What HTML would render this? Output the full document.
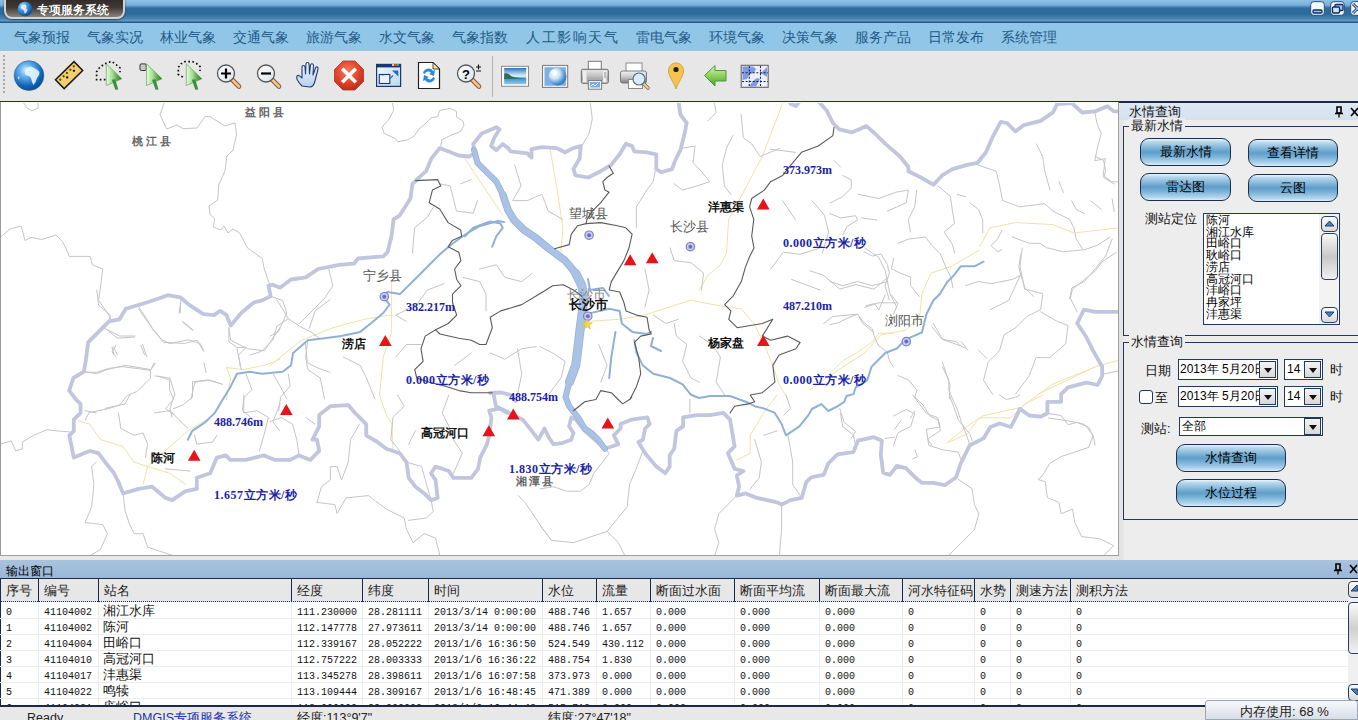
<!DOCTYPE html>
<html><head><meta charset="utf-8">
<style>
*{margin:0;padding:0;box-sizing:border-box}
html,body{width:1358px;height:720px;overflow:hidden;background:#e8e8e8;font-family:"Liberation Sans",sans-serif;position:relative}
.a{position:absolute;white-space:nowrap}
#title{left:0;top:0;width:1358px;height:23px;background:linear-gradient(#8ec2e6 0px,#7ab1da 5px,#2f6d9f 8px,#2b6a9b 14px,#4f87b4 19px,#6a9dc6 21px,#1f5d8e 22px)}
#tab{left:4px;top:-4px;width:121px;height:23px;border:2px solid #d2d2d2;border-top:none;border-radius:0 0 8px 8px;background:linear-gradient(#2a2624,#403a36 55%,#8a837c);box-shadow:0 1px 2px rgba(0,0,0,.5)}
#tabtxt{left:37px;top:2px;color:#fff;font-size:12px;font-weight:bold;text-shadow:0 0 1px #000}
#menu{left:0;top:23px;width:1358px;height:28px;background:#92c6e8}
.mi{top:29px;font-size:14px;line-height:17px;color:#1f5a86}
#tool{left:0;top:51px;width:1358px;height:50px;background:linear-gradient(#ececee 0,#e7e7e7 2px,#e7e7e7)}
#navline{left:0;top:101px;width:1358px;height:2px;background:#1e2d4d}
#map{left:0;top:102px;width:1119px;height:454px;background:#fff;border-right:1px solid #a0a0a0;border-bottom:1px solid #a0a0a0;border-left:1px solid #9a9a9a;overflow:hidden}
#panel{left:1119px;top:103px;width:239px;height:457px;background:linear-gradient(90deg,#e2e2e2 0,#e6e6e6 4px,#ededed 6px)}
#outhdr{left:0;top:560px;width:1358px;height:18px;background:linear-gradient(#a9c3de,#9ab7d6)}
#outline{left:0;top:578px;width:1358px;height:1px;background:#1b2a4a}
#thead{left:0;top:579px;width:1348px;height:23px;background:#e7e7e7;border-bottom:1px dotted #1b2a4a;border-left:1px solid #1b2a4a}
#tbody{left:0;top:602px;width:1348px;height:103px;background:#fff;overflow:hidden;border-left:1px solid #1b2a4a}
#tbot{left:0;top:705px;width:1358px;height:2px;background:#1b2a4a}
#status{left:0;top:707px;width:1358px;height:13px;background:#e8e8e8}
.th{top:583px;font-size:13px;line-height:16px;color:#222}
.sep{top:579px;width:1px;height:23px;background:#1b2a4a}
.vs{top:602px;width:1px;height:103px;background:#ececec}
.hs{left:0;width:1348px;height:1px;background:#ededed}
.td{font-size:12px;line-height:16px;color:#111}
.mono{font-family:"Liberation Mono",monospace;font-size:10px;font-weight:500}
.btn{border:1px solid #1d2f4e;border-radius:9px;background:linear-gradient(#eaf5fc 0%,#b9d9ee 10%,#86b8da 32%,#5f9dc8 50%,#7db4d9 68%,#b2d5ec 90%,#dcedf8 100%);font-size:12.5px;color:#000;text-align:center}
.lbl{font-size:13px;color:#111}
.box{background:#fff;border:1px solid #23395a}
.ddb{width:17px;height:17px;border:1px solid #23395a;background:linear-gradient(#f4f4f4,#d8d8d8);}
.ddb:after{content:"";position:absolute;left:4px;top:6px;border-left:4px solid transparent;border-right:4px solid transparent;border-top:5px solid #111}
.mp{font-size:12px;font-weight:bold;color:#111}
.mv{font-size:12px;font-weight:bold;color:#1a22a8;font-family:"Liberation Serif",serif;letter-spacing:.5px}
.ml{font-size:13px;color:#555}
</style></head><body>

<div class="a" id="title"></div>
<div class="a" id="tab"></div>
<svg class="a" style="left:17px;top:1px" width="16" height="16" viewBox="0 0 16 16"><defs><radialGradient id="tg" cx="35%" cy="30%" r="70%"><stop offset="0" stop-color="#bfe4ff"/><stop offset=".5" stop-color="#3b8fd6"/><stop offset="1" stop-color="#0b4d9a"/></radialGradient></defs><circle cx="8" cy="8" r="7.3" fill="url(#tg)"/><path d="M5 4 L8 3.5 L9.5 5 L9 7 L10.5 9 L9 12 L7.5 12.5 L7 9.5 L5 8 L3.5 7 Z" fill="#e8f4ff" opacity=".85"/></svg>
<div class="a" id="tabtxt">专项服务系统</div>
<svg class="a" style="left:1310px;top:1px" width="15" height="15" viewBox="0 0 15 15"><rect x=".7" y=".7" width="13.6" height="13.6" rx="3" fill="#f4f8fc" stroke="#2a4f78" stroke-width="1"/><rect x="3" y="9" width="9" height="3" rx="1" fill="#9cc4ec" stroke="#0c2a66" stroke-width="1.3"/></svg>
<svg class="a" style="left:1330px;top:1px" width="15" height="15" viewBox="0 0 15 15"><rect x=".7" y=".7" width="13.6" height="13.6" rx="3" fill="#f4f8fc" stroke="#2a4f78" stroke-width="1"/><rect x="5" y="3.5" width="8" height="6" rx="1" fill="#9cc4ec" stroke="#0c2a66" stroke-width="1.3"/><rect x="2.5" y="6" width="7" height="6" rx="1" fill="#cfe3f7" stroke="#0c2a66" stroke-width="1.3"/></svg>
<svg class="a" style="left:1350px;top:1px" width="15" height="15" viewBox="0 0 15 15"><rect x=".7" y=".7" width="13.6" height="13.6" rx="3" fill="#f4f8fc" stroke="#2a4f78" stroke-width="1"/><path d="M3 3 L12 12 M12 3 L3 12" stroke="#0c2a66" stroke-width="3"/><path d="M3 3 L12 12 M12 3 L3 12" stroke="#9cc4ec" stroke-width="1.3"/></svg>
<div class="a" id="menu"></div>
<div class="a mi" style="left:14px;">气象预报</div>
<div class="a mi" style="left:87px;">气象实况</div>
<div class="a mi" style="left:160px;">林业气象</div>
<div class="a mi" style="left:233px;">交通气象</div>
<div class="a mi" style="left:306px;">旅游气象</div>
<div class="a mi" style="left:379px;">水文气象</div>
<div class="a mi" style="left:452px;">气象指数</div>
<div class="a mi" style="left:526px;letter-spacing:1.6px">人工影响天气</div>
<div class="a mi" style="left:636px;">雷电气象</div>
<div class="a mi" style="left:709px;">环境气象</div>
<div class="a mi" style="left:782px;">决策气象</div>
<div class="a mi" style="left:855px;">服务产品</div>
<div class="a mi" style="left:928px;">日常发布</div>
<div class="a mi" style="left:1001px;">系统管理</div>
<div class="a" id="tool"></div>
<div class="a" style="left:3px;top:55px;width:2px;height:39px;background:repeating-linear-gradient(#a8a8a8 0 2px,transparent 2px 4px)"></div>
<div class="a" style="left:492px;top:56px;width:1px;height:41px;background:#b4b4b4"></div>
<svg class="a" style="left:0;top:0" width="800" height="102" viewBox="0 0 800 102"><defs>
<radialGradient id="gl" cx="38%" cy="30%" r="75%"><stop offset="0" stop-color="#cdeaff"/><stop offset=".35" stop-color="#4aa0e6"/><stop offset=".8" stop-color="#0c56a8"/><stop offset="1" stop-color="#083c80"/></radialGradient>
<linearGradient id="ga" x1="0" y1="0" x2="1" y2="1"><stop offset="0" stop-color="#e6f6dc"/><stop offset=".5" stop-color="#7cc25a"/><stop offset="1" stop-color="#2e8a2a"/></linearGradient>
<linearGradient id="lens" x1="0" y1="0" x2="1" y2="1"><stop offset="0" stop-color="#ffffff"/><stop offset="1" stop-color="#d8e4ee"/></linearGradient>
<radialGradient id="stop" cx="45%" cy="35%" r="70%"><stop offset="0" stop-color="#f77a5a"/><stop offset=".6" stop-color="#e0412a"/><stop offset="1" stop-color="#b52a18"/></radialGradient>
<linearGradient id="hand" x1="0" y1="0" x2="0" y2="1"><stop offset="0" stop-color="#f2f7ff"/><stop offset="1" stop-color="#b8cff0"/></linearGradient>
<linearGradient id="pic" x1="0" y1="0" x2="0" y2="1"><stop offset="0" stop-color="#3d86c8"/><stop offset=".45" stop-color="#bfe0f4"/><stop offset=".6" stop-color="#3b7a6a"/><stop offset="1" stop-color="#5fb0d8"/></linearGradient>
<radialGradient id="wg" cx="55%" cy="45%" r="60%"><stop offset="0" stop-color="#ffffff"/><stop offset=".5" stop-color="#8fbfe8"/><stop offset="1" stop-color="#2f78c2"/></radialGradient>
<linearGradient id="prt" x1="0" y1="0" x2="0" y2="1"><stop offset="0" stop-color="#f4f4f4"/><stop offset=".5" stop-color="#c8c8c8"/><stop offset="1" stop-color="#7a7a7a"/></linearGradient>
<linearGradient id="garr" x1="0" y1="0" x2="0" y2="1"><stop offset="0" stop-color="#d9f2b8"/><stop offset=".5" stop-color="#8fd25c"/><stop offset="1" stop-color="#4e9c2c"/></linearGradient>
</defs><defs><radialGradient id="gl2" cx="40%" cy="32%" r="70%"><stop offset="0" stop-color="#d6efff"/><stop offset=".3" stop-color="#6ab4ec"/><stop offset=".75" stop-color="#1264b8"/><stop offset="1" stop-color="#0a4a92"/></radialGradient></defs><circle cx="29" cy="75.6" r="14.9" fill="url(#gl2)" stroke="#2a6aa8" stroke-width=".6"/><path d="M25 71 L27 67.5 L31 66.5 L34 68 L37 69.5 L39.5 72 L39 75 L37 78 L35.5 82 L33.5 85 L32 82 L31 78 L29 76 L26.5 75.5 L25 73.5 Z M17.5 77 L19.5 76.5 L19 80 Z" fill="#e2f4ff" opacity=".92"/><g transform="translate(69.1,75.1) rotate(-44.5)"><rect x="-13" y="-6.2" width="26" height="12.4" fill="#f2cf68" stroke="#1a1a1a" stroke-width="1.5"/><circle cx="-9.5" cy="-3" r="1.1" fill="#5a3a10"/><circle cx="-4.7" cy="-3" r="1.1" fill="#5a3a10"/><circle cx="0" cy="-3" r="1.1" fill="#5a3a10"/><circle cx="4.7" cy="-3" r="1.1" fill="#5a3a10"/><circle cx="9.5" cy="-3" r="1.1" fill="#5a3a10"/><circle cx="-3" cy="0.3" r="1.2" fill="#111"/><circle cx="6.5" cy="0.3" r="1.2" fill="#111"/></g><defs><linearGradient id="ga2" x1="0" y1="0" x2="1" y2="0"><stop offset="0" stop-color="#eafae0"/><stop offset=".4" stop-color="#a8dc94"/><stop offset=".7" stop-color="#5aac4a"/><stop offset="1" stop-color="#2a7a2a"/></linearGradient></defs><path d="M105.5 79.7 H96.6 V71.8 L99.7 67.4 L104.1 64.3 L107.7 62.5 L112.1 61.6 L116.1 64.7 L120 67.8 V72.2" fill="none" stroke="#111" stroke-width="1.7" stroke-dasharray="1.7 2.4"/><path d="M106.3 63.8 L121.8 78.8 L106.3 85.5 Z" fill="url(#ga2)" stroke="#4a9a3e" stroke-width=".6" stroke-linejoin="round"/><path d="M111.8 79.8 L115.3 79.3 L118.3 89.5 L115.3 89.8 Z" fill="#3f8f3f"/><rect x="140" y="63.9" width="6.2" height="6.6" rx="1.2" fill="#c8c8c8" stroke="#333" stroke-width="1"/><path d="M146.5 63.8 L162.0 78.8 L146.5 85.5 Z" fill="url(#ga2)" stroke="#4a9a3e" stroke-width=".6" stroke-linejoin="round"/><path d="M152.0 79.8 L155.5 79.3 L158.5 89.5 L155.5 89.8 Z" fill="#3f8f3f"/><path d="M182.8 77.1 L178.3 74.4 V67.4 L181 63.8 L185 61.6 L192.5 61.6 L196.9 63.8 L200 66.5 V70.9" fill="none" stroke="#111" stroke-width="1.7" stroke-dasharray="1.7 2.4"/><path d="M186.3 63.8 L201.8 78.8 L186.3 85.5 Z" fill="url(#ga2)" stroke="#4a9a3e" stroke-width=".6" stroke-linejoin="round"/><path d="M191.8 79.8 L195.3 79.3 L198.3 89.5 L195.3 89.8 Z" fill="#3f8f3f"/><path d="M232 79.5 L239 86.5" stroke="#7a5a3a" stroke-width="4.6" stroke-linecap="round"/><path d="M232 79.5 L239 86.5" stroke="#f3c28a" stroke-width="2.8" stroke-linecap="round"/><circle cx="226" cy="73.5" r="8.5" fill="url(#lens)" stroke="#555" stroke-width="1.3"/><path d="M221 73.5 H231 M226 68.5 V78.5" stroke="#000" stroke-width="2.2"/><path d="M272 79.5 L279 86.5" stroke="#7a5a3a" stroke-width="4.6" stroke-linecap="round"/><path d="M272 79.5 L279 86.5" stroke="#f3c28a" stroke-width="2.8" stroke-linecap="round"/><circle cx="266" cy="73.5" r="8.5" fill="url(#lens)" stroke="#555" stroke-width="1.3"/><path d="M261 73.5 H271" stroke="#000" stroke-width="2.2"/><path d="M302 86 C298 82 296 78 297 76 C298 74.5 300 76 302 78 L302 67 C302 65 304.5 65 305 67 L305.5 74 L306 64 C306 62 309 62 309 64 L309.5 74 L310.5 65 C311 63 313.5 63.5 313.5 65.5 L313 75 L315.5 68 C316.5 66 318.5 67 318 69 L315 81 C314 85 312 87 310 87 Z" fill="url(#hand)" stroke="#1f3f70" stroke-width="1.1" stroke-linejoin="round"/><path d="M343 61 L355 61 L363.5 69.5 L363.5 81.5 L355 90 L343 90 L334.5 81.5 L334.5 69.5 Z" fill="url(#stop)" stroke="#a83a2a" stroke-width=".8"/><path d="M343.5 70 L354.5 81 M354.5 70 L343.5 81" stroke="#fff" stroke-width="3.6" stroke-linecap="square"/><defs><linearGradient id="wb" x1="0" y1="0" x2="1" y2="1"><stop offset="0" stop-color="#f4f9fe"/><stop offset="1" stop-color="#bcd6ef"/></linearGradient></defs><rect x="376.6" y="64.4" width="24" height="22" fill="url(#wb)" stroke="#163a6e" stroke-width="1.2"/><rect x="376.6" y="64.4" width="24" height="3" fill="#163a6e"/><rect x="392" y="64" width="2.2" height="2" fill="#f0d040"/><rect x="394.3" y="64" width="2.2" height="2" fill="#d84a2a"/><rect x="396.6" y="64" width="2.2" height="2" fill="#5ab04a"/><rect x="379.3" y="74.5" width="10.5" height="9" fill="#e8f2fb" stroke="#163a6e" stroke-width="1.1"/><rect x="381" y="74" width="3" height="1.2" fill="#163a6e"/><path d="M392 70.5 H398.3 V76.5 Z" fill="#1e6fc0"/><path d="M393 75.5 L390 78.5" stroke="#1e6fc0" stroke-width="1.2"/><path d="M418.5 62.5 H433 L439.5 69 V88.5 H418.5 Z" fill="#fff" stroke="#222" stroke-width="1.2"/><path d="M433 62.5 V69 H439.5 Z" fill="#f6e6a8" stroke="#222" stroke-width=".8"/><path d="M423 73 C424 68 431 67 433 71 L435 70 L434 76 L429 74 L431 73 C429 71 426 71 425 74 Z" fill="#2a8ad6"/><path d="M435 78 C434 83 427 84 425 80 L423 81 L424 75 L429 77 L427 78 C429 80 432 80 433 77 Z" fill="#2a8ad6"/><path d="M472 79.5 L479 86.5" stroke="#7a5a3a" stroke-width="4.6" stroke-linecap="round"/><path d="M472 79.5 L479 86.5" stroke="#f3c28a" stroke-width="2.8" stroke-linecap="round"/><circle cx="466" cy="73.5" r="8.5" fill="url(#lens)" stroke="#555" stroke-width="1.3"/><text x="462" y="78.5" font-family="Liberation Sans" font-weight="bold" font-size="13" fill="#000">?</text><path d="M476 67 H481 M478.5 64.5 V69.5 M476 71 H481" stroke="#111" stroke-width="1.1"/><defs><linearGradient id="sky" x1="0" y1="0" x2="0" y2="1"><stop offset="0" stop-color="#2f74c4"/><stop offset=".45" stop-color="#cfe8f7"/><stop offset="1" stop-color="#e8f4fb"/></linearGradient><linearGradient id="sea" x1="0" y1="0" x2="0" y2="1"><stop offset="0" stop-color="#3a88c0"/><stop offset="1" stop-color="#8ccaf0"/></linearGradient><radialGradient id="wg2" cx="35%" cy="35%" r="70%"><stop offset="0" stop-color="#ffffff"/><stop offset=".4" stop-color="#cfe3f6"/><stop offset=".8" stop-color="#4f8fd0"/><stop offset="1" stop-color="#2f6fb8"/></radialGradient><linearGradient id="prt2" x1="0" y1="0" x2="0" y2="1"><stop offset="0" stop-color="#e8e8e8"/><stop offset=".45" stop-color="#c4c4c4"/><stop offset=".7" stop-color="#a8a8a8"/><stop offset="1" stop-color="#d4d4d4"/></linearGradient></defs><rect x="501.5" y="66.3" width="27" height="20" fill="#fbfbfb" stroke="#8a8a8a" stroke-width="1"/><rect x="504.2" y="68" width="22" height="16.2" fill="url(#sky)"/><path d="M504.2 77.5 L526.2 77.5 L526.2 84.2 L504.2 84.2 Z" fill="url(#sea)"/><path d="M504.2 73.5 C507 73 509 74 511 76 C514 77.5 519 77.5 523 78.5 L504.2 79 Z" fill="#2e6e56"/><rect x="542.5" y="65.4" width="25.2" height="22" fill="#f6f6f6" stroke="#7a7a7a" stroke-width="1"/><rect x="544.5" y="67.2" width="21.4" height="18.6" fill="#7ab2e6"/><circle cx="557.5" cy="76.5" r="9" fill="url(#wg2)"/><path d="M552 70 C555 69 558 71 557 74 C555 76 553 74 551 73 Z" fill="#fff" opacity=".9"/><rect x="588.3" y="61.3" width="13" height="8.5" fill="#fdfdfd" stroke="#7a7a7a" stroke-width="1"/><rect x="581.3" y="69.3" width="27" height="14" rx="1.5" fill="url(#prt2)" stroke="#6a6a6a" stroke-width="1"/><rect x="583" y="71" width="3.5" height="11" fill="#eeeeee"/><rect x="603" y="71" width="3.5" height="11" fill="#eeeeee"/><path d="M604 73 H606 M604 75 H606 M604 77 H606" stroke="#666" stroke-width=".7"/><rect x="588.3" y="80.6" width="13.3" height="8.6" fill="#fbfbfb" stroke="#7a7a7a" stroke-width="1"/><rect x="589.8" y="82" width="10.3" height="5.5" fill="#7aaee0"/><path d="M590.5 86.5 L593 84 L595 86 L598 83" stroke="#fff" stroke-width=".8" fill="none"/><rect x="626" y="63" width="16" height="9" fill="#fff" stroke="#8a8a8a" stroke-width="1"/><rect x="620.5" y="71" width="26" height="12" rx="2" fill="url(#prt)" stroke="#7a7a7a" stroke-width="1"/><rect x="628.5" y="79.5" width="14" height="9" fill="#fff" stroke="#8a8a8a" stroke-width="1"/><path d="M643 83 L648 88" stroke="#7a5a3a" stroke-width="3.4" stroke-linecap="round"/><path d="M643 83 L648 88" stroke="#f3d48a" stroke-width="2" stroke-linecap="round"/><circle cx="639" cy="79" r="6" fill="#d8ecfa" stroke="#5a6f86" stroke-width="1.2"/><path d="M676 89 C674 82 668.5 77 668.5 71 C668.5 66 672 63 676 63 C680 63 683.5 66 683.5 71 C683.5 77 678 82 676 89 Z" fill="#f6c44e" stroke="#c89a30" stroke-width=".8"/><circle cx="676" cy="69.5" r="2.6" fill="#222"/><path d="M704.5 75.5 L715 65.5 L715 70.5 L726 70.5 L726 81 L715 81 L715 86 Z" fill="url(#garr)" stroke="#4a9a34" stroke-width="1" stroke-linejoin="round"/><rect x="741.2" y="65.3" width="27" height="22" fill="#eef0f6" stroke="#666" stroke-width="1.1"/><path d="M742.5 66.5 H753 L756 69 L754 73 L750 74 L747 79 L742.5 80 Z M767 67 L767 77 L761 73 Z M749 86.5 L753 81 L757 78 L760 79 L756 86.5 Z" fill="#7e9ae0"/><path d="M742 72.7 H768 M742 81.5 H768 M749.3 66 V87 M760.5 66 V87" stroke="#14246a" stroke-width="1.1" stroke-dasharray="2 1.6"/></svg>
<div class="a" id="navline"></div>
<div class="a" id="map"></div>
<svg class="a" style="left:1px;top:103px" width="1117" height="452" viewBox="1 103 1117 452">
<g fill="none" stroke-linejoin="round" stroke-linecap="round">
<polyline points="391.6,281.6 391.6,331.9 383.3,357.1 379.6,395.0 386.3,415.1 391.9,424.1 393.0,448.7" stroke="#efe3a6" stroke-width="1"/>
<polyline points="270.0,365.4 301.5,340.3 332.9,327.7 364.4,319.3 391.0,315.0" stroke="#efe3a6" stroke-width="1"/>
<polyline points="226.5,367.5 243.3,369.6 264.3,365.4 280.0,359.2" stroke="#efe3a6" stroke-width="1"/>
<polyline points="226.5,367.5 230.7,378.0 226.5,399.0" stroke="#efe3a6" stroke-width="1"/>
<polyline points="78.3,420.7 89.5,424.1 100.6,439.7 123.0,446.4 134.2,462.1 147.6,466.6 143.1,484.5" stroke="#efe3a6" stroke-width="1"/>
<polyline points="147.6,466.6 170.0,473.3 185.6,484.5" stroke="#efe3a6" stroke-width="1"/>
<polyline points="147.6,466.6 170.0,446.4 187.9,430.8 210.2,417.4" stroke="#efe3a6" stroke-width="1"/>
<polyline points="588.2,321.4 619.7,319.3 644.9,315.1 670.0,306.7 691.0,300.4 724.6,306.7 741.3,308.8 753.9,323.5 764.4,344.5 772.8,365.4 779.1,384.3 787.5,399.0" stroke="#efe3a6" stroke-width="1"/>
<polyline points="699.4,290.0 707.8,275.3 720.4,264.8 726.5,253.0 728.6,219.4 741.2,196.4 762.2,156.5 780.0,110.4 782.6,102.0" stroke="#efe3a6" stroke-width="1"/>
<polyline points="979.0,250.3 951.6,266.3 931.0,273.1 921.9,293.7 919.6,316.5 905.9,330.2 880.8,334.8 864.8,353.0 839.7,369.0 810.0,389.5" stroke="#efe3a6" stroke-width="1"/>
<polyline points="1038.3,394.1 1095.4,366.7 1120.0,359.9" stroke="#efe3a6" stroke-width="1"/>
<polyline points="979.7,246.7 990.0,227.8 1015.2,222.6 1052.9,224.6 1073.9,233.0 1118.9,227.8" stroke="#efe3a6" stroke-width="1"/>
<polyline points="947.0,443.0 967.5,433.8 979.0,417.8 1010.9,417.8 1024.6,404.1 1042.9,395.0" stroke="#efe3a6" stroke-width="1"/>
<polyline points="777.0,395.0 763.7,412.9 750.2,435.3 750.2,453.2 736.8,459.9" stroke="#efe3a6" stroke-width="1"/>
<polyline points="550.3,150.2 556.6,186.0 562.9,227.8 560.8,253.0" stroke="#efe3a6" stroke-width="1"/>
<polyline points="464.9,158.6 502.7,215.3" stroke="#efe3a6" stroke-width="1"/>
<polyline points="1095.1,367.1 1052.7,384.1 1020.9,407.4 982.7,415.9 970.0,424.4 948.8,441.3" stroke="#efe3a6" stroke-width="1"/>
<polyline points="830.0,373.5 842.7,360.7 857.6,352.3 872.4,341.7 878.8,333.2 893.6,333.2" stroke="#efe3a6" stroke-width="1"/>
<polyline points="23.0,102.0 27.0,108.0 32.0,111.0 38.0,108.0 38.0,102.0" stroke="#c4c4ca" stroke-width="1"/>
<polyline points="164.6,102.0 160.0,114.5 166.7,129.0 177.0,125.0 183.0,128.7 197.0,128.0 205.0,116.6 210.0,116.6 225.0,126.0 235.0,122.8 236.5,135.0 233.0,150.0 227.0,156.0 225.0,170.7 218.7,185.0 217.7,200.0 209.0,206.0 210.0,214.5 214.6,218.7 213.5,227.0 220.8,230.0 224.0,226.0 228.0,233.0 233.0,229.0 239.6,233.0 247.5,248.0 262.2,258.5 264.3,269.0 268.5,281.6 270.6,285.8" stroke="#c4c4ca" stroke-width="1"/>
<polyline points="0.0,237.4 10.0,229.0 21.0,226.0 22.0,229.0 25.0,240.5 31.0,237.4 41.7,239.5 56.0,235.0 62.5,241.6 67.7,252.0 69.2,256.4 90.2,256.4 92.3,264.8 102.8,269.0 100.7,285.8 98.6,300.4 109.1,315.1 111.2,320.4" stroke="#c4c4ca" stroke-width="1"/>
<polyline points="392.5,102.0 393.6,110.4 389.4,118.8 382.0,127.2 384.2,133.5 395.7,138.7 397.8,141.8 408.3,139.8 414.6,135.6 418.8,129.3 426.1,123.0 431.3,117.7 437.6,116.7 439.7,110.4 450.2,108.3 456.5,111.4 456.5,116.7 462.8,120.9 463.9,125.1 460.7,131.4 450.2,135.6 441.8,139.8 440.8,146.0" stroke="#c4c4ca" stroke-width="1"/>
<polyline points="412.5,253.0 414.6,227.8 427.2,217.3 433.5,206.9" stroke="#c4c4ca" stroke-width="1"/>
<polyline points="439.7,183.8 450.2,185.9 456.5,211.1 473.3,213.2 477.5,200.6" stroke="#c4c4ca" stroke-width="1"/>
<polyline points="460.7,183.8 471.2,179.6" stroke="#c4c4ca" stroke-width="1"/>
<polyline points="590.2,102.0 592.3,118.8 589.1,133.5 581.8,146.0" stroke="#c4c4ca" stroke-width="1"/>
<polyline points="714.1,102.0 716.2,112.5 707.8,120.9" stroke="#c4c4ca" stroke-width="1"/>
<polyline points="682.5,148.1 695.0,146.0 693.0,162.8 701.3,171.2 709.7,181.7 697.2,185.9 682.5,190.1 674.1,183.8" stroke="#c4c4ca" stroke-width="1"/>
<polyline points="732.8,135.6 726.5,148.1 722.3,164.9 724.4,185.9 730.7,194.3" stroke="#c4c4ca" stroke-width="1"/>
<polyline points="741.2,114.6 743.3,137.7 751.7,143.9 760.1,156.5 780.0,148.1" stroke="#c4c4ca" stroke-width="1"/>
<polyline points="655.2,171.2 653.1,181.7 646.8,190.1 636.3,206.9 636.3,227.8" stroke="#c4c4ca" stroke-width="1"/>
<polyline points="514.7,165.0 521.0,185.9 512.6,200.6 527.3,200.6 541.9,194.3 548.2,211.1 562.9,219.4" stroke="#c4c4ca" stroke-width="1"/>
<polyline points="937.8,185.9 950.4,196.4 952.5,211.1 954.6,223.6 944.1,232.0 952.5,244.6 954.6,253.0" stroke="#c4c4ca" stroke-width="1"/>
<polyline points="1036.4,144.0 1042.7,156.5 1044.8,171.2 1050.0,190.0" stroke="#c4c4ca" stroke-width="1"/>
<polyline points="916.8,190.1 914.7,206.9 908.4,219.4 910.5,232.0" stroke="#c4c4ca" stroke-width="1"/>
<polyline points="858.1,194.3 879.1,198.5 895.8,192.2 908.4,190.1 906.3,202.7 887.4,211.1" stroke="#c4c4ca" stroke-width="1"/>
<polyline points="770.0,149.2 795.2,152.3" stroke="#c4c4ca" stroke-width="1"/>
<polyline points="811.9,200.6 824.5,215.3 828.7,232.0 822.4,253.0" stroke="#c4c4ca" stroke-width="1"/>
<polyline points="782.6,200.6 795.2,219.4" stroke="#c4c4ca" stroke-width="1"/>
<polyline points="1094.8,112.5 1096.9,123.0 1101.1,133.5 1096.9,150.2 1094.8,160.7 1105.3,158.6 1103.2,175.4 1111.6,181.7 1118.9,181.7" stroke="#c4c4ca" stroke-width="1"/>
<polyline points="977.6,164.9 990.0,169.1 996.3,171.2 1000.5,190.0 1002.6,200.5 1019.4,206.8 1044.5,203.7 1052.9,211.0 1069.7,219.4 1073.9,227.8 1076.0,238.3 1082.2,248.8" stroke="#c4c4ca" stroke-width="1"/>
<polyline points="138.4,308.8 148.9,323.5 153.1,329.8 163.6,342.4 184.6,343.4 197.1,340.3 203.4,350.8" stroke="#c4c4ca" stroke-width="1"/>
<polyline points="107.0,329.8 117.4,338.2 134.2,337.1" stroke="#c4c4ca" stroke-width="1"/>
<polyline points="182.5,321.4 193.0,329.8" stroke="#c4c4ca" stroke-width="1"/>
<polyline points="86.0,371.7 96.5,373.8 107.0,369.6 125.8,365.4 151.0,369.6 155.2,363.4" stroke="#c4c4ca" stroke-width="1"/>
<polyline points="228.6,327.7 230.7,340.3 247.5,348.7 264.3,350.8 280.0,327.7" stroke="#c4c4ca" stroke-width="1"/>
<polyline points="237.0,348.7 241.2,369.6" stroke="#c4c4ca" stroke-width="1"/>
<polyline points="190.9,399.0 195.0,382.2 209.7,380.1 222.3,384.3" stroke="#c4c4ca" stroke-width="1"/>
<polyline points="113.3,346.6 117.4,355.0" stroke="#c4c4ca" stroke-width="1"/>
<polyline points="142.6,344.5 146.8,356.7" stroke="#c4c4ca" stroke-width="1"/>
<polyline points="180.4,302.5 180.4,313.0" stroke="#c4c4ca" stroke-width="1"/>
<polyline points="155.2,376.0 170.0,378.0 175.0,395.0" stroke="#c4c4ca" stroke-width="1"/>
<polyline points="270.0,296.2 282.6,300.4 286.8,313.0 278.4,331.9 270.0,336.1" stroke="#c4c4ca" stroke-width="1"/>
<polyline points="299.4,323.5 312.0,311.0 324.5,298.3 332.9,285.8 328.7,269.0" stroke="#c4c4ca" stroke-width="1"/>
<polyline points="307.8,340.3 305.7,357.1 307.8,369.6 320.3,378.0 324.5,399.0" stroke="#c4c4ca" stroke-width="1"/>
<polyline points="273.2,374.0 282.6,390.6 286.8,399.0" stroke="#c4c4ca" stroke-width="1"/>
<polyline points="343.4,357.1 360.2,365.4 366.5,378.0 374.9,399.0" stroke="#c4c4ca" stroke-width="1"/>
<polyline points="395.8,357.1 406.3,344.5 421.0,344.5" stroke="#c4c4ca" stroke-width="1"/>
<polyline points="406.3,321.4 395.8,315.1 416.8,304.6 427.3,290.0 444.1,283.7" stroke="#c4c4ca" stroke-width="1"/>
<polyline points="479.7,269.0 496.5,264.8 504.9,277.4 521.7,281.6 532.2,273.2" stroke="#c4c4ca" stroke-width="1"/>
<polyline points="463.0,277.4 479.7,281.6 486.0,294.1 486.0,310.9" stroke="#c4c4ca" stroke-width="1"/>
<polyline points="490.2,352.9 504.9,359.2 521.7,348.7 536.4,346.6" stroke="#c4c4ca" stroke-width="1"/>
<polyline points="517.5,348.7 521.7,373.8 517.5,394.8" stroke="#c4c4ca" stroke-width="1"/>
<polyline points="454.6,365.4 471.3,352.9" stroke="#c4c4ca" stroke-width="1"/>
<polyline points="670.0,248.0 674.2,260.6 691.0,262.7 703.6,273.2 701.5,290.0" stroke="#c4c4ca" stroke-width="1"/>
<polyline points="644.9,269.0 649.1,290.0 644.9,306.7" stroke="#c4c4ca" stroke-width="1"/>
<polyline points="674.2,323.5 676.3,336.1 686.8,344.5 682.6,361.3 691.0,378.0 699.4,382.2" stroke="#c4c4ca" stroke-width="1"/>
<polyline points="699.4,336.1 712.0,344.5 720.4,357.1 716.2,382.2 724.6,394.8" stroke="#c4c4ca" stroke-width="1"/>
<polyline points="770.7,269.0 783.3,252.2 800.1,254.3 820.0,248.0" stroke="#c4c4ca" stroke-width="1"/>
<polyline points="791.7,279.5 820.0,290.0" stroke="#c4c4ca" stroke-width="1"/>
<polyline points="540.0,346.6 552.6,352.9 565.2,361.3 561.0,378.0 548.4,394.8" stroke="#c4c4ca" stroke-width="1"/>
<polyline points="598.7,344.5 607.1,365.4 600.8,382.2" stroke="#c4c4ca" stroke-width="1"/>
<polyline points="653.3,315.1 665.8,323.5 678.4,319.3" stroke="#c4c4ca" stroke-width="1"/>
<polyline points="1022.3,248.0 1020.0,266.3 1024.6,289.1 1042.9,293.7 1040.6,309.6 1026.9,316.5 1015.5,327.9 1004.1,334.8 999.5,350.7 988.1,362.2 983.5,380.4 992.6,394.1" stroke="#c4c4ca" stroke-width="1"/>
<polyline points="1116.0,252.6 1102.2,261.7 1095.4,270.8 1072.5,289.1 1070.3,298.2 1077.1,311.9" stroke="#c4c4ca" stroke-width="1"/>
<polyline points="1040.6,311.9 1056.6,321.0 1068.0,325.6 1065.7,343.9 1049.7,357.6 1036.0,357.6 1029.2,375.9 1015.5,394.1" stroke="#c4c4ca" stroke-width="1"/>
<polyline points="864.8,248.0 878.5,257.1 885.3,270.8 889.9,293.7 896.8,307.4" stroke="#c4c4ca" stroke-width="1"/>
<polyline points="810.0,270.8 823.7,275.4 839.7,289.1 855.7,284.6 873.9,289.1 887.6,277.7" stroke="#c4c4ca" stroke-width="1"/>
<polyline points="864.8,307.4 878.5,302.8 896.8,302.8" stroke="#c4c4ca" stroke-width="1"/>
<polyline points="823.7,323.3 832.8,316.5 857.9,314.2 862.5,323.3 873.9,332.5" stroke="#c4c4ca" stroke-width="1"/>
<polyline points="933.3,323.3 942.4,339.3 956.1,341.6 960.7,346.2" stroke="#c4c4ca" stroke-width="1"/>
<polyline points="942.4,362.2 950.0,385.0 949.3,399.0" stroke="#c4c4ca" stroke-width="1"/>
<polyline points="990.4,309.6 1008.6,300.5 1020.0,276.0" stroke="#c4c4ca" stroke-width="1"/>
<polyline points="0.0,444.2 11.2,440.9 15.7,450.9 22.4,448.7 22.4,442.0 33.5,435.3 47.0,429.7 55.9,430.8 69.3,431.9" stroke="#c4c4ca" stroke-width="1"/>
<polyline points="96.2,462.1 91.7,466.6 93.9,484.5 91.7,506.8 85.0,522.5 102.9,524.7 107.4,533.7 100.6,549.3 89.5,556.0" stroke="#c4c4ca" stroke-width="1"/>
<polyline points="123.0,493.4 125.2,511.3 129.7,524.7 134.2,533.7 143.1,533.7 147.6,547.1 161.0,551.6 174.5,556.0" stroke="#c4c4ca" stroke-width="1"/>
<polyline points="118.5,412.9 120.8,428.5 134.2,435.3 143.1,433.0 147.6,444.2 145.4,457.6" stroke="#c4c4ca" stroke-width="1"/>
<polyline points="85.0,410.7 96.2,412.9" stroke="#c4c4ca" stroke-width="1"/>
<polyline points="105.1,408.4 125.2,403.9 129.7,395.0" stroke="#c4c4ca" stroke-width="1"/>
<polyline points="154.3,412.9 170.0,410.7 178.9,419.6 187.9,428.5" stroke="#c4c4ca" stroke-width="1"/>
<polyline points="174.5,395.0 170.0,408.4 172.2,417.4" stroke="#c4c4ca" stroke-width="1"/>
<polyline points="194.6,435.3 196.8,444.2 212.5,442.0 217.0,435.3" stroke="#c4c4ca" stroke-width="1"/>
<polyline points="243.8,395.0 243.8,412.9 257.2,410.7 268.4,417.4 263.9,435.3 259.4,451.0" stroke="#c4c4ca" stroke-width="1"/>
<polyline points="280.0,404.0 272.9,421.8 279.6,430.8" stroke="#c4c4ca" stroke-width="1"/>
<polyline points="165.5,468.8 190.1,471.0" stroke="#c4c4ca" stroke-width="1"/>
<polyline points="317.0,502.4 321.4,486.7 330.4,480.0 330.4,466.6 337.1,466.6 341.6,480.0 348.3,462.1 350.5,439.7 359.5,424.1" stroke="#c4c4ca" stroke-width="1"/>
<polyline points="317.0,502.4 334.9,504.6 337.1,513.5 346.0,497.9 368.4,495.6 386.3,509.1 404.2,518.0 406.4,529.2 413.1,542.6 424.3,533.7 435.5,538.1 440.0,556.0" stroke="#c4c4ca" stroke-width="1"/>
<polyline points="406.4,462.1 421.6,466.6 431.0,500.1" stroke="#c4c4ca" stroke-width="1"/>
<polyline points="431.0,500.1 433.3,511.3 426.6,518.0 408.7,520.3" stroke="#c4c4ca" stroke-width="1"/>
<polyline points="448.9,395.0 442.2,412.9 448.9,426.3 453.4,439.7 462.3,453.2 453.4,473.3" stroke="#c4c4ca" stroke-width="1"/>
<polyline points="518.3,495.6 525.0,502.4 534.0,515.8 542.9,529.2 550.0,538.1" stroke="#c4c4ca" stroke-width="1"/>
<polyline points="270.0,421.8 281.2,417.4 292.4,424.1 296.8,439.7 299.1,455.4" stroke="#c4c4ca" stroke-width="1"/>
<polyline points="305.8,417.4 314.7,424.1" stroke="#c4c4ca" stroke-width="1"/>
<polyline points="397.5,395.0 404.2,406.2 393.0,417.4 390.8,439.7 399.7,450.9" stroke="#c4c4ca" stroke-width="1"/>
<polyline points="415.4,430.8 408.7,444.2" stroke="#c4c4ca" stroke-width="1"/>
<polyline points="540.0,488.9 553.4,486.7 566.8,491.2 580.3,491.2 589.2,484.5 593.7,473.3 602.6,462.1 609.3,453.2 604.9,448.7" stroke="#c4c4ca" stroke-width="1"/>
<polyline points="642.9,450.9 636.2,468.8 629.5,484.5 627.2,506.8 607.1,531.4 618.3,542.6 625.0,556.0" stroke="#c4c4ca" stroke-width="1"/>
<polyline points="540.0,524.7 551.2,540.4 573.5,542.6 607.1,531.4" stroke="#c4c4ca" stroke-width="1"/>
<polyline points="736.8,495.6 718.9,513.5 714.5,529.2 718.9,542.6 714.5,556.0" stroke="#c4c4ca" stroke-width="1"/>
<polyline points="781.6,504.6 781.6,529.2 779.3,556.0" stroke="#c4c4ca" stroke-width="1"/>
<polyline points="788.0,435.0 792.7,462.0 792.7,484.5 801.7,497.9" stroke="#c4c4ca" stroke-width="1"/>
<polyline points="754.7,439.7 761.4,462.1 759.2,477.8 750.2,489.0" stroke="#c4c4ca" stroke-width="1"/>
<polyline points="689.9,399.5 689.9,412.9" stroke="#c4c4ca" stroke-width="1"/>
<polyline points="786.0,395.0 790.5,408.4 783.8,415.1" stroke="#c4c4ca" stroke-width="1"/>
<polyline points="763.7,435.3 777.1,430.8" stroke="#c4c4ca" stroke-width="1"/>
<polyline points="958.4,479.5 972.1,488.6 974.4,504.6 978.9,513.7 974.4,529.7 960.7,543.4 949.3,554.8" stroke="#c4c4ca" stroke-width="1"/>
<polyline points="1047.4,413.3 1061.1,415.5 1068.0,424.7 1077.1,422.4 1088.5,427.0 1093.1,436.1 1088.5,447.5 1061.1,456.6 1049.7,463.5 1042.9,474.9 1038.3,479.5 1045.2,481.8 1047.4,497.7 1058.9,502.3 1061.1,513.7 1072.5,509.2 1074.9,522.9 1081.7,536.6 1100.0,538.8 1113.7,545.7 1104.5,554.8" stroke="#c4c4ca" stroke-width="1"/>
<polyline points="839.7,408.7 844.2,422.4 855.7,431.5 851.1,438.4" stroke="#c4c4ca" stroke-width="1"/>
<polyline points="912.7,395.0 926.4,413.3 937.8,417.8 940.1,427.0 926.4,429.2 928.7,445.2 942.4,449.8 958.4,452.1 960.7,458.9" stroke="#c4c4ca" stroke-width="1"/>
<polyline points="949.3,395.0 956.1,413.3 958.4,420.1 969.8,433.8 972.1,440.7" stroke="#c4c4ca" stroke-width="1"/>
<polyline points="910.5,417.8 915.0,411.0" stroke="#c4c4ca" stroke-width="1"/>
<polyline points="901.3,420.1 894.5,429.2" stroke="#c4c4ca" stroke-width="1"/>
<polyline points="915.0,449.8 917.3,456.6 912.7,459.0" stroke="#c4c4ca" stroke-width="1"/>
<polyline points="999.5,395.0 1006.4,399.6 1015.5,397.3 1020.0,395.0" stroke="#c4c4ca" stroke-width="1"/>
<polyline points="885.3,438.4 894.5,437.2" stroke="#c4c4ca" stroke-width="1"/>
<polyline points="1095.1,156.4 1103.6,160.6 1105.7,171.2 1103.6,177.6 1114.2,183.9" stroke="#c4c4ca" stroke-width="1"/>
<polyline points="830.0,203.0 842.7,196.7 851.2,188.2 851.2,179.7 842.7,175.5" stroke="#c4c4ca" stroke-width="1"/>
<polyline points="830.0,213.6 840.6,217.9 855.5,215.7 857.6,220.0 847.0,226.4 842.7,234.8" stroke="#c4c4ca" stroke-width="1"/>
<polyline points="861.8,217.9 876.7,220.0" stroke="#c4c4ca" stroke-width="1"/>
<polyline points="957.3,194.5 965.7,196.7" stroke="#c4c4ca" stroke-width="1"/>
<polyline points="970.0,203.0 978.5,209.4 982.7,220.0 982.7,232.7" stroke="#c4c4ca" stroke-width="1"/>
<polyline points="863.9,251.8 872.4,256.0 880.9,253.9 887.3,264.5 889.4,273.0 885.1,285.7 889.4,300.0" stroke="#c4c4ca" stroke-width="1"/>
<polyline points="897.9,243.3 908.5,239.1 925.4,237.0 931.8,245.4 940.3,253.9 946.6,268.8 950.9,277.3 953.0,287.9" stroke="#c4c4ca" stroke-width="1"/>
<polyline points="893.6,258.2 891.5,268.8 900.0,273.0 910.6,277.3 910.6,285.7 919.1,296.3" stroke="#c4c4ca" stroke-width="1"/>
<polyline points="1012.4,237.0 1029.4,243.3 1040.0,243.3 1046.3,247.6 1063.3,251.8 1084.5,249.7 1097.2,245.4 1109.9,237.0" stroke="#c4c4ca" stroke-width="1"/>
<polyline points="1020.9,253.9 1018.8,266.7 1020.9,275.1 1012.4,279.4 991.2,283.6 978.5,281.5 965.7,285.7" stroke="#c4c4ca" stroke-width="1"/>
<polyline points="1112.1,239.1 1105.7,256.0 1095.1,268.8 1084.5,281.5 1071.8,287.9 1069.7,298.5" stroke="#c4c4ca" stroke-width="1"/>
<polyline points="1020.9,275.1 1025.0,288.0 1033.6,296.3" stroke="#c4c4ca" stroke-width="1"/>
<polyline points="1001.8,230.6 997.5,239.1 991.2,245.4 997.5,251.8 1001.8,249.7" stroke="#c4c4ca" stroke-width="1"/>
<polyline points="1071.8,200.9 1076.0,209.4 1084.5,213.6" stroke="#c4c4ca" stroke-width="1"/>
<polyline points="1090.8,200.9 1101.4,209.4" stroke="#c4c4ca" stroke-width="1"/>
<polyline points="1112.1,198.8 1114.2,211.5" stroke="#c4c4ca" stroke-width="1"/>
<polyline points="1059.1,181.8 1063.3,192.4" stroke="#c4c4ca" stroke-width="1"/>
<polyline points="830.0,281.5 842.7,285.7 857.6,281.5 872.4,285.7 887.3,281.5" stroke="#c4c4ca" stroke-width="1"/>
<polyline points="834.2,160.6 840.6,167.0" stroke="#c4c4ca" stroke-width="1"/>
<polyline points="830.0,324.7 838.5,322.6 847.0,318.3 857.6,314.1 863.9,322.6 872.4,328.9 874.5,337.4 878.8,345.9 887.3,352.3 889.4,360.7 893.6,367.1" stroke="#c4c4ca" stroke-width="1"/>
<polyline points="866.0,305.6 874.5,303.5 878.8,309.9 885.1,295.0" stroke="#c4c4ca" stroke-width="1"/>
<polyline points="891.5,295.0 897.9,303.5 893.6,314.1" stroke="#c4c4ca" stroke-width="1"/>
<polyline points="931.8,326.8 942.4,339.5 955.1,343.8 965.7,348.0" stroke="#c4c4ca" stroke-width="1"/>
<polyline points="961.5,341.7 967.8,350.2" stroke="#c4c4ca" stroke-width="1"/>
<polyline points="942.4,367.1 948.8,379.8 948.8,390.4 957.3,409.5 961.5,422.3 965.7,432.9 970.0,445.0" stroke="#c4c4ca" stroke-width="1"/>
<polyline points="897.9,375.6 908.5,379.8 917.0,390.4 914.8,396.8 923.3,405.3 929.7,415.9 938.2,420.1 940.3,430.7 927.6,439.2 931.8,445.0" stroke="#c4c4ca" stroke-width="1"/>
<polyline points="840.6,413.8 842.7,426.5 853.3,435.0 855.5,445.0" stroke="#c4c4ca" stroke-width="1"/>
<polyline points="893.6,415.9 906.4,409.5 914.8,413.8 910.6,426.5 897.9,432.9 893.6,445.0" stroke="#c4c4ca" stroke-width="1"/>
<polyline points="1048.5,418.0 1063.3,420.1 1076.0,422.3 1084.5,424.4 1093.0,435.0 1095.1,445.0" stroke="#c4c4ca" stroke-width="1"/>
<polyline points="1103.6,374.0 1118.0,371.0" stroke="#c4c4ca" stroke-width="1"/>
<polyline points="978.5,350.2 986.9,358.6" stroke="#c4c4ca" stroke-width="1"/>
<polyline points="96.8,290.0 98.7,305.3 110.2,314.9 108.3,322.5" stroke="#c4c4ca" stroke-width="1"/>
<polyline points="138.9,307.2 146.6,318.7 152.3,328.3 161.9,339.8 169.6,343.6 188.7,339.8 200.2,343.6 204.0,351.3" stroke="#c4c4ca" stroke-width="1"/>
<polyline points="104.5,328.3 119.8,336.0 135.1,336.0" stroke="#c4c4ca" stroke-width="1"/>
<polyline points="181.0,299.6 179.1,313.0" stroke="#c4c4ca" stroke-width="1"/>
<polyline points="183.0,322.5 192.5,330.2" stroke="#c4c4ca" stroke-width="1"/>
<polyline points="112.1,347.4 114.0,355.1" stroke="#c4c4ca" stroke-width="1"/>
<polyline points="140.9,345.5 144.7,355.1" stroke="#c4c4ca" stroke-width="1"/>
<polyline points="85.3,372.3 96.8,372.3 108.3,368.5 121.7,366.6 137.0,368.5 150.4,370.4 154.2,362.8" stroke="#c4c4ca" stroke-width="1"/>
<polyline points="150.4,370.4 150.4,378.1 142.8,385.7 137.0,391.5 127.4,395.3 119.8,404.9 108.3,408.7 89.1,412.5 85.3,420.0" stroke="#c4c4ca" stroke-width="1"/>
<polyline points="158.1,376.2 169.6,380.0 169.6,389.6 173.5,399.1 165.7,408.7 173.5,414.5" stroke="#c4c4ca" stroke-width="1"/>
<polyline points="192.5,381.9 207.9,380.0 221.3,383.8" stroke="#c4c4ca" stroke-width="1"/>
<polyline points="192.5,381.9 192.5,397.2 183.0,404.9 173.5,408.7" stroke="#c4c4ca" stroke-width="1"/>
<polyline points="204.0,362.8 206.0,372.3" stroke="#c4c4ca" stroke-width="1"/>
<polyline points="228.9,328.3 228.9,341.7 236.6,347.4 246.1,347.4 238.5,355.1 240.4,366.6" stroke="#c4c4ca" stroke-width="1"/>
<polyline points="276.8,299.6 288.3,318.7 276.8,326.4 273.0,339.8 261.5,351.3 250.0,355.1" stroke="#c4c4ca" stroke-width="1"/>
<polyline points="288.3,318.7 299.8,326.4 311.2,332.1 318.9,337.9" stroke="#c4c4ca" stroke-width="1"/>
<polyline points="330.0,299.6 315.0,311.0 309.3,328.3" stroke="#c4c4ca" stroke-width="1"/>
<polyline points="305.5,343.6 307.4,362.8 318.9,368.5 330.0,372.3" stroke="#c4c4ca" stroke-width="1"/>
<polyline points="246.1,374.2 251.9,389.6 244.2,397.2 242.3,410.6 251.9,418.3" stroke="#c4c4ca" stroke-width="1"/>
<polyline points="288.3,374.2 290.2,385.7 280.6,397.2 278.7,410.6" stroke="#c4c4ca" stroke-width="1"/>
<polyline points="116.0,345.0 112.0,352.0 116.0,357.0" stroke="#c4c4ca" stroke-width="1"/>
<polyline points="75.5,399.0 69.2,390.6 73.4,378.0 83.9,371.7 86.0,359.2 88.1,342.4 98.6,331.9 109.1,321.4 119.5,319.3 125.8,308.8 146.8,302.5 159.4,298.3 167.8,295.2 180.4,297.3 188.8,304.6 203.4,314.1 213.9,315.1 220.2,310.9 226.5,315.1 230.7,325.6 241.2,313.0 253.8,302.5 262.1,300.4 270.6,296.2 268.5,285.8 272.7,284.7 280.0,287.8 282.6,285.8 291.0,279.5 305.7,277.4 318.2,269.0 339.2,264.8 353.9,263.7 358.1,258.5 370.7,257.4 383.3,256.4 387.5,252.2 391.5,236.2 393.6,219.4 399.9,215.3 410.4,198.5 412.5,183.8 416.7,179.6 426.1,171.2 431.3,158.6 439.7,148.1 448.1,151.3 458.6,155.5 469.1,156.5 474.3,153.4 473.3,144.0 481.7,133.5 496.4,127.2 499.5,129.3 494.3,137.7 491.1,146.0 496.4,150.2 502.7,144.0 508.0,148.0 510.5,151.3 518.9,152.3 527.3,153.4 531.5,157.6 531.5,149.2 541.9,147.1 556.6,148.1 565.0,152.3 573.4,148.1 580.7,146.0 579.7,158.6 573.4,169.1 575.5,175.4 588.1,177.5 600.7,171.2 611.2,164.9 619.5,154.4 625.8,143.9 632.1,146.0 634.2,151.3 646.8,152.3 656.3,154.4 656.3,169.1 661.5,172.3 672.0,169.1 675.1,160.7 680.4,150.2 684.6,133.5 686.7,123.0 680.4,114.6 678.3,100.0 800.0,90.0 817.2,100.0 826.6,110.4 832.9,123.0 839.2,129.3 851.8,132.4 866.5,126.1 874.9,133.5 885.4,143.9 900.0,156.5 908.4,167.0 908.4,171.2 921.0,177.5 933.6,184.8 942.0,175.4 952.5,169.1 967.2,164.9 977.6,162.8 986.0,152.3 992.3,137.7 1000.7,121.9 1007.0,123.0 1015.4,131.4 1023.8,125.1 1040.6,120.9 1052.9,112.5 1057.1,104.1 1071.8,103.0 1082.2,112.5 1094.8,111.4 1107.4,106.2 1113.7,111.4 1125.0,111.4 1125.0,311.9 1118.2,311.9 1095.4,311.9 1084.0,309.6 1077.1,323.3 1086.3,337.0 1093.1,350.7 1102.2,366.7 1102.2,375.9 1097.7,385.0 1086.3,382.7 1068.0,387.3 1061.1,394.1 1061.1,401.8 1047.4,401.8 1047.4,413.3 1040.6,416.7 1029.2,415.5 1020.0,408.7 1015.5,417.8 1010.9,427.0 999.5,423.5 990.4,427.0 983.5,438.4 969.8,445.2 960.7,463.5 956.1,477.2 944.7,485.2 933.3,482.9 921.9,482.9 915.0,477.2 905.9,468.1 896.8,465.8 889.9,474.9 883.1,472.6 880.8,454.4 881.9,440.7 873.9,437.2 857.9,440.7 853.4,452.1 837.4,454.4 828.3,463.5 823.7,474.9 815.0,476.5 810.6,477.8 806.2,482.2 801.7,497.9 790.5,500.1 781.6,504.6 777.1,502.4 757.0,497.9 745.7,493.4 736.8,495.6 739.1,486.7 736.8,475.5 743.5,471.0 734.6,468.8 727.9,453.2 734.6,446.4 732.3,433.0 730.1,419.6 723.4,412.9 710.0,415.1 696.6,415.1 683.1,417.4 683.1,426.3 676.4,430.8 674.2,448.7 669.7,455.4 669.7,466.6 665.3,473.3 656.3,466.6 645.1,453.2 638.4,442.0 642.9,439.7 645.1,428.5 649.6,424.1 647.4,417.4 631.7,419.6 620.5,424.1 620.5,428.5 613.8,435.3 618.3,444.2 604.9,448.7 584.7,430.8 575.8,419.6 571.3,417.4 569.1,426.3 573.5,433.0 571.3,439.7 562.4,443.1 553.4,444.2 548.9,437.5 544.5,428.5 538.4,439.7 531.7,430.8 522.7,419.6 509.3,412.9 500.4,408.4 489.2,410.7 491.4,417.4 489.2,435.3 487.0,444.2 480.2,457.6 478.0,468.8 471.3,477.8 453.4,477.8 448.9,471.0 435.5,466.6 431.0,473.3 435.5,480.0 437.7,497.9 431.0,500.1 424.3,493.4 415.4,486.7 408.7,477.8 406.4,462.1 399.7,453.2 386.3,448.7 377.4,442.0 366.2,435.3 366.2,424.1 355.0,412.9 348.3,405.1 330.4,406.2 319.2,415.1 319.2,426.3 312.5,439.7 317.0,439.7 319.2,450.9 310.3,459.9 299.1,455.4 290.1,459.9 275.0,459.9 263.9,455.4 246.0,459.9 230.4,459.9 225.9,455.4 216.9,457.6 210.2,473.3 196.8,477.8 196.8,488.9 185.6,491.2 172.2,500.1 165.5,497.9 152.1,486.7 138.7,488.9 123.0,493.4 118.5,482.2 114.1,473.3 105.1,462.1 98.4,453.2 89.5,450.9 73.8,457.6 71.6,446.4 69.3,435.3 73.8,430.8 73.8,419.6 80.5,412.9 80.5,403.9 75.5,399.0" stroke="#c2c5de" stroke-width="3.8"/>
<polyline points="490.0,393.0 500.7,392.5 511.0,395.0 516.0,401.0" stroke="#c2c5de" stroke-width="3.8"/>
<polyline points="493.7,395.0 495.9,406.2 507.1,412.9" stroke="#c2c5de" stroke-width="3.8"/>
<polyline points="788.0,100.0 791.0,104.0 796.0,106.0 799.0,102.0" stroke="#c2c5de" stroke-width="3.8"/>
<polyline points="187.9,439.7 192.3,430.8 205.8,421.8 214.7,412.9 221.4,401.7 230.7,386.4 237.0,373.8 249.6,371.7 262.2,373.8 282.6,371.7 291.0,365.4 293.1,352.9 307.8,340.3 324.5,338.2 341.3,336.1 360.2,331.9 370.7,323.5 383.3,313.0 389.5,304.6 383.3,296.2 387.5,292.0 400.0,294.1 408.4,285.8 421.0,273.2 429.4,264.8 439.9,254.3 452.0,244.0 466.0,234.0 480.0,226.0 498.0,221.0 504.0,222.0" stroke="#8fb1d6" stroke-width="2"/>
<polyline points="634.4,340.3 636.5,352.9 642.8,365.4 653.3,373.8 670.0,378.0 682.6,384.3 691.0,394.8 699.0,398.0 710.0,396.0 730.0,396.0 745.8,401.7 754.7,406.2 763.7,408.4 774.8,412.9 781.6,424.1 786.0,435.3 799.4,426.3 808.4,415.1 812.0,409.0 821.4,404.1 828.3,411.0 837.4,406.4 844.2,401.8 846.5,396.0 853.4,394.1 855.7,387.3 867.1,380.4 871.6,366.7 885.3,353.0 896.8,348.5 905.9,339.3 921.9,332.5 926.4,314.2 933.3,300.5 940.1,293.7 947.0,282.2 953.8,275.4 960.7,266.3 974.4,266.3 983.5,261.7" stroke="#8fb1d6" stroke-width="2"/>
<polyline points="581.9,315.1 609.2,308.8 619.7,310.9 621.8,323.5 632.3,331.9 647.0,334.0 651.2,331.9" stroke="#8fb1d6" stroke-width="2"/>
<polyline points="588.0,279.0 590.0,290.0 603.0,288.0 609.0,296.0" stroke="#8fb1d6" stroke-width="2"/>
<polyline points="615.5,331.9 611.3,357.0 609.2,378.0" stroke="#8fb1d6" stroke-width="2"/>
<polyline points="653.0,338.0 651.0,346.0 661.0,351.0" stroke="#8fb1d6" stroke-width="2"/>
<polyline points="464.9,236.2 473.3,227.8 490.0,221.5 500.6,223.6 502.7,227.8 496.4,236.2 492.2,246.7" stroke="#8fb1d6" stroke-width="2"/>
<polyline points="474.0,150.0 477.5,162.8 488.0,173.3 496.4,181.7 503.0,195.0" stroke="#9cb3d8" stroke-width="6.1"/>
<polyline points="503.0,195.0 508.0,210.0 514.0,220.0 524.0,230.0 536.0,238.0 548.0,248.0 565.2,260.6 575.7,273.2" stroke="#9cb3d8" stroke-width="7.6"/>
<polyline points="575.7,273.2 581.9,285.8 584.0,298.3 581.9,315.1 579.8,331.9 577.8,348.7 575.7,365.4 569.4,382.2" stroke="#9cb3d8" stroke-width="9.1"/>
<polyline points="569.4,382.2 565.5,397.0 569.1,406.2 578.0,417.4 584.7,428.5 591.4,433.0 598.2,439.7 604.9,448.7" stroke="#9cb3d8" stroke-width="6.1"/>
<polyline points="474.0,150.0 477.5,162.8 488.0,173.3 496.4,181.7 503.0,195.0" stroke="#a9c2e6" stroke-width="4.5"/>
<polyline points="503.0,195.0 508.0,210.0 514.0,220.0 524.0,230.0 536.0,238.0 548.0,248.0 565.2,260.6 575.7,273.2" stroke="#a9c2e6" stroke-width="6"/>
<polyline points="575.7,273.2 581.9,285.8 584.0,298.3 581.9,315.1 579.8,331.9 577.8,348.7 575.7,365.4 569.4,382.2" stroke="#a9c2e6" stroke-width="7.5"/>
<polyline points="569.4,382.2 565.5,397.0 569.1,406.2 578.0,417.4 584.7,428.5 591.4,433.0 598.2,439.7 604.9,448.7" stroke="#a9c2e6" stroke-width="4.5"/>
<polyline points="415.6,180.6 437.6,179.6 440.8,185.9 432.4,190.1 429.2,202.7 439.7,209.0 448.1,222.6 460.7,230.0 461.7,236.2 452.3,240.4 448.1,246.7 458.8,252.2 460.9,260.6 454.6,269.0 456.7,279.5 460.9,285.8 452.5,294.1 452.5,302.5 456.7,315.1 448.3,323.5 435.7,329.8 425.2,336.1 421.0,348.7 423.1,361.3 414.7,369.6 416.8,378.0 429.4,382.2 446.2,386.4 458.8,390.6 471.3,392.7 492.3,392.7" stroke="#5a5a5a" stroke-width="1.1"/>
<polyline points="435.7,329.8 439.9,334.0 458.8,338.2 471.3,340.3 479.7,344.5 486.0,344.5 492.3,327.7 490.2,317.2 500.7,310.9 521.7,304.6 542.7,292.0 552.6,285.8 563.1,284.7 573.6,290.0 582.0,296.2" stroke="#5a5a5a" stroke-width="1.1"/>
<polyline points="609.1,166.0 613.3,173.3 607.0,177.5 602.8,181.7 604.9,190.1 609.1,192.2 600.7,202.7 592.3,211.1 587.0,219.4 586.0,223.6 577.6,225.7 571.3,234.1 569.2,244.6 554.5,248.8" stroke="#5a5a5a" stroke-width="1.1"/>
<polyline points="586.0,223.6 600.7,222.6 617.4,225.7 625.8,227.8 632.1,234.1 629.0,248.0 623.9,260.6 617.6,271.1 611.3,281.6 609.2,290.0 619.7,292.0 623.9,302.5 626.0,310.9 636.5,315.1 647.0,317.2 649.1,329.8 651.2,334.0 640.7,336.1 634.4,342.4 638.6,357.1 640.7,373.8 636.5,386.4 630.2,399.0 622.8,403.9 617.6,399.0 611.3,392.7 600.8,390.6 595.9,399.5 584.7,401.7 573.5,410.7" stroke="#5a5a5a" stroke-width="1.1"/>
<polyline points="834.0,127.2 832.9,135.6 818.2,146.0 801.5,152.3 791.0,164.9 782.6,175.4 770.6,181.7 764.3,190.1 751.7,198.5 749.6,206.9 753.8,219.4 751.7,236.2 754.0,248.0 749.7,256.4 745.5,266.9 741.3,281.6 733.0,296.2 724.6,304.6 730.9,310.9 728.8,319.3 737.2,327.7 762.3,323.5 772.8,319.3 762.3,336.1 770.7,340.3 787.5,336.1 800.1,342.4 795.9,348.7 779.1,355.0 772.8,365.4 774.9,382.2 762.3,392.7 750.2,395.0 754.7,401.7 748.0,403.9 734.6,406.2 730.1,412.9" stroke="#5a5a5a" stroke-width="1.1"/>
<polyline points="631.7,397.2 630.2,399.0" stroke="#5a5a5a" stroke-width="1.1"/>
</g>
<circle cx="589.1" cy="235.2" r="4.2" fill="#c9cdf0" stroke="#7a7fc4" stroke-width="1.2"/><circle cx="589.1" cy="235.2" r="2" fill="#6a70c0"/>
<circle cx="690.4" cy="246.7" r="4.2" fill="#c9cdf0" stroke="#7a7fc4" stroke-width="1.2"/><circle cx="690.4" cy="246.7" r="2" fill="#6a70c0"/>
<circle cx="384.3" cy="296.7" r="4.2" fill="#c9cdf0" stroke="#7a7fc4" stroke-width="1.2"/><circle cx="384.3" cy="296.7" r="2" fill="#6a70c0"/>
<circle cx="587.8" cy="316.2" r="4.2" fill="#c9cdf0" stroke="#7a7fc4" stroke-width="1.2"/><circle cx="587.8" cy="316.2" r="2" fill="#6a70c0"/>
<circle cx="906.3" cy="341.6" r="4.2" fill="#c9cdf0" stroke="#7a7fc4" stroke-width="1.2"/><circle cx="906.3" cy="341.6" r="2" fill="#6a70c0"/>
<path d="M757 209.5 L763.3 198.5 L769.6 209.5 Z" fill="#e8121a"/>
<path d="M623.9 265.3 L630.1999999999999 254.3 L636.5 265.3 Z" fill="#e8121a"/>
<path d="M645.9 263.2 L652.1999999999999 252.2 L658.5 263.2 Z" fill="#e8121a"/>
<path d="M757 346 L763.3 335 L769.6 346 Z" fill="#e8121a"/>
<path d="M379 346 L385.3 335 L391.6 346 Z" fill="#e8121a"/>
<path d="M187.9 460.8 L194.20000000000002 449.8 L200.5 460.8 Z" fill="#e8121a"/>
<path d="M280 415 L286.3 404 L292.6 415 Z" fill="#e8121a"/>
<path d="M482.5 436.2 L488.8 425.2 L495.1 436.2 Z" fill="#e8121a"/>
<path d="M507 419.4 L513.3 408.4 L519.6 419.4 Z" fill="#e8121a"/>
<path d="M601.5 428.4 L607.8 417.4 L614.1 428.4 Z" fill="#e8121a"/>
<polygon points="587.2,319.1 588.6,322.7 592.4,322.9 589.4,325.3 590.4,329.0 587.2,326.9 584.0,329.0 585.0,325.3 582.0,322.9 585.8,322.7" fill="#f2d64a" stroke="#d8b830" stroke-width=".5"/>
</svg>
<div class="a ml" style="left:245px;top:104px;line-height:16px;font-size:11px;letter-spacing:3px;font-weight:bold;color:#666">益阳县</div>
<div class="a ml" style="left:132px;top:132.5px;line-height:16px;font-size:11px;letter-spacing:3px;font-weight:bold;color:#666">桃江县</div>
<div class="a ml" style="left:569px;top:206px;line-height:16px;">望城县</div>
<div class="a ml" style="left:670px;top:219px;line-height:16px;">长沙县</div>
<div class="a ml" style="left:363px;top:268px;line-height:16px;">宁乡县</div>
<div class="a ml" style="left:885px;top:312.5px;line-height:16px;">浏阳市</div>
<div class="a ml" style="left:567px;top:287px;line-height:16px;color:#888">长沙市</div>
<div class="a ml" style="left:516px;top:472.5px;line-height:16px;font-size:11px;letter-spacing:2px;font-weight:bold;color:#666">湘潭县</div>
<div class="a mp" style="left:708px;top:199px;line-height:16px;">洋惠渠</div>
<div class="a mp" style="left:342px;top:335.5px;line-height:16px;">涝店</div>
<div class="a mp" style="left:569px;top:297px;line-height:16px;font-size:13px">长沙市</div>
<div class="a mp" style="left:708px;top:335px;line-height:16px;">杨家盘</div>
<div class="a mp" style="left:151px;top:449.6px;line-height:16px;">陈河</div>
<div class="a mp" style="left:421px;top:424.5px;line-height:16px;">高冠河口</div>
<div class="a mv" style="left:406px;top:298.7px;line-height:16px;letter-spacing:0">382.217m</div>
<div class="a mv" style="left:406px;top:371.5px;line-height:16px;">0.000立方米/秒</div>
<div class="a mv" style="left:783px;top:298px;line-height:16px;letter-spacing:0">487.210m</div>
<div class="a mv" style="left:783px;top:372px;line-height:16px;">0.000立方米/秒</div>
<div class="a mv" style="left:783px;top:162px;line-height:16px;letter-spacing:0">373.973m</div>
<div class="a mv" style="left:783px;top:235px;line-height:16px;">0.000立方米/秒</div>
<div class="a mv" style="left:214px;top:413.8px;line-height:16px;letter-spacing:0">488.746m</div>
<div class="a mv" style="left:214px;top:487px;line-height:16px;">1.657立方米/秒</div>
<div class="a mv" style="left:509px;top:389px;line-height:16px;letter-spacing:0">488.754m</div>
<div class="a mv" style="left:509px;top:461px;line-height:16px;">1.830立方米/秒</div>
<div class="a" id="panel"></div>
<div class="a" style="left:1119px;top:103px;width:239px;height:17px;background:linear-gradient(#dfe8f2,#d5e1ee)"></div>
<div class="a lbl" style="left:1129px;top:104px;font-size:13px;line-height:16px">水情查询</div>
<svg class="a" style="left:1334px;top:106px" width="10" height="12" viewBox="0 0 10 12"><path d="M3 1 H7 V7 H3 Z" fill="none" stroke="#000" stroke-width="1.6"/><path d="M1 7.5 H9 M5 7.5 V11.5" stroke="#000" stroke-width="1.3"/></svg>
<svg class="a" style="left:1350px;top:107px" width="9" height="10" viewBox="0 0 9 10"><path d="M1 1 L8 9 M8 1 L1 9" stroke="#000" stroke-width="1.6"/></svg>
<div class="a" style="left:1123px;top:126px;width:240px;height:210px;border:1px solid #23395a;border-right:none"></div>
<div class="a lbl" style="left:1129px;top:118px;padding:0 2px;background:#ededed;font-size:13px;line-height:16px">最新水情</div>
<div class="a btn" style="left:1140px;top:138px;width:91px;height:28px;line-height:26px">最新水情</div>
<div class="a btn" style="left:1248px;top:139px;width:90px;height:28px;line-height:26px">查看详情</div>
<div class="a btn" style="left:1140px;top:173px;width:91px;height:28px;line-height:26px">雷达图</div>
<div class="a btn" style="left:1248px;top:174px;width:90px;height:28px;line-height:26px">云图</div>
<div class="a lbl" style="left:1145px;top:211px;line-height:16px">测站定位</div>
<div class="a box" style="left:1203px;top:213px;width:137px;height:112px"></div>
<div class="a" style="left:1206px;top:214.0px;font-size:12px;line-height:12px;color:#000">陈河</div>
<div class="a" style="left:1206px;top:225.7px;font-size:12px;line-height:12px;color:#000">湘江水库</div>
<div class="a" style="left:1206px;top:237.4px;font-size:12px;line-height:12px;color:#000">田峪口</div>
<div class="a" style="left:1206px;top:249.1px;font-size:12px;line-height:12px;color:#000">耿峪口</div>
<div class="a" style="left:1206px;top:260.8px;font-size:12px;line-height:12px;color:#000">涝店</div>
<div class="a" style="left:1206px;top:272.5px;font-size:12px;line-height:12px;color:#000">高冠河口</div>
<div class="a" style="left:1206px;top:284.2px;font-size:12px;line-height:12px;color:#000">沣峪口</div>
<div class="a" style="left:1206px;top:295.9px;font-size:12px;line-height:12px;color:#000">冉家坪</div>
<div class="a" style="left:1206px;top:307.6px;font-size:12px;line-height:12px;color:#000">沣惠渠</div>
<div class="a" style="left:1319px;top:214px;width:20px;height:110px;background:#f3f3f3"></div>
<div class="a" style="left:1321px;top:216px;width:17px;height:16px;border:1px solid #2a3f5f;border-radius:4px;background:linear-gradient(#fbfbfb,#dadada)"></div>
<svg class="a" style="left:1324px;top:220px" width="11" height="7"><path d="M1 6 L5.5 1 L10 6 Z" fill="#4a7fb8" stroke="#1f3f6a" stroke-width="1"/></svg>
<div class="a" style="left:1321px;top:233px;width:17px;height:47px;border:1px solid #2a3f5f;border-radius:4px;background:linear-gradient(#f8f8f8,#c8c8c8 50%,#f0f0f0)"></div>
<div class="a" style="left:1321px;top:307px;width:17px;height:16px;border:1px solid #2a3f5f;border-radius:4px;background:linear-gradient(#fbfbfb,#dadada)"></div>
<svg class="a" style="left:1324px;top:311px" width="11" height="7"><path d="M1 1 L5.5 6 L10 1 Z" fill="#4a7fb8" stroke="#1f3f6a" stroke-width="1"/></svg>
<div class="a" style="left:1123px;top:342px;width:240px;height:178px;border:1px solid #23395a;border-right:none"></div>
<div class="a lbl" style="left:1129px;top:334px;padding:0 2px;background:#ededed;font-size:13px;line-height:16px">水情查询</div>
<div class="a lbl" style="left:1145px;top:363px;line-height:16px">日期</div>
<div class="a box" style="left:1178px;top:359px;width:100px;height:21px"></div>
<div class="a" style="left:1180px;top:362px;font-size:12px;line-height:14px;color:#000;width:80px;overflow:hidden">2013年 5月20日</div>
<div class="a ddb" style="left:1259px;top:361px"></div>
<div class="a box" style="left:1284px;top:359px;width:39px;height:21px"></div>
<div class="a" style="left:1287px;top:362px;font-size:12px;line-height:14px;color:#000">14</div>
<div class="a ddb" style="left:1304px;top:361px"></div>
<div class="a lbl" style="left:1330px;top:362px;line-height:16px">时</div>
<div class="a lbl" style="left:1155px;top:390px;line-height:16px">至</div>
<div class="a box" style="left:1178px;top:386px;width:100px;height:21px"></div>
<div class="a" style="left:1180px;top:389px;font-size:12px;line-height:14px;color:#000;width:80px;overflow:hidden">2013年 5月20日</div>
<div class="a ddb" style="left:1259px;top:388px"></div>
<div class="a box" style="left:1284px;top:386px;width:39px;height:21px"></div>
<div class="a" style="left:1287px;top:389px;font-size:12px;line-height:14px;color:#000">14</div>
<div class="a ddb" style="left:1304px;top:388px"></div>
<div class="a lbl" style="left:1330px;top:389px;line-height:16px">时</div>
<div class="a" style="left:1139px;top:390px;width:14px;height:14px;border:1px solid #23395a;border-radius:3px;background:#fff"></div>
<div class="a lbl" style="left:1141px;top:420.5px;line-height:16px">测站:</div>
<div class="a box" style="left:1179px;top:417px;width:144px;height:19px"></div>
<div class="a" style="left:1182px;top:419px;font-size:12px;line-height:14px;color:#000">全部</div>
<div class="a ddb" style="left:1304px;top:418px;height:17px"></div>
<div class="a btn" style="left:1176px;top:444px;width:110px;height:28px;line-height:26px">水情查询</div>
<div class="a btn" style="left:1176px;top:479px;width:110px;height:28px;line-height:26px">水位过程</div>
<div class="a" id="outhdr"></div>
<div class="a" style="left:6px;top:563.5px;font-size:12px;line-height:14px;color:#000">输出窗口</div>
<svg class="a" style="left:1333px;top:563px" width="10" height="12" viewBox="0 0 10 12"><path d="M3 1 H7 V7 H3 Z M3 1 V7" fill="none" stroke="#000" stroke-width="1.6"/><path d="M1 7.5 H9 M5 7.5 V11.5" stroke="#000" stroke-width="1.3"/></svg>
<svg class="a" style="left:1349px;top:564px" width="9" height="10" viewBox="0 0 9 10"><path d="M1 1 L8 9 M8 1 L1 9" stroke="#000" stroke-width="1.6"/></svg>
<div class="a" id="outline"></div>
<div class="a" id="thead"></div>
<div class="a th" style="left:6px">序号</div>
<div class="a th" style="left:44px">编号</div>
<div class="a sep" style="left:38px"></div>
<div class="a th" style="left:104px">站名</div>
<div class="a sep" style="left:98px"></div>
<div class="a th" style="left:297px">经度</div>
<div class="a sep" style="left:291px"></div>
<div class="a th" style="left:368px">纬度</div>
<div class="a sep" style="left:362px"></div>
<div class="a th" style="left:434px">时间</div>
<div class="a sep" style="left:428px"></div>
<div class="a th" style="left:548px">水位</div>
<div class="a sep" style="left:542px"></div>
<div class="a th" style="left:602px">流量</div>
<div class="a sep" style="left:596px"></div>
<div class="a th" style="left:656px">断面过水面</div>
<div class="a sep" style="left:650px"></div>
<div class="a th" style="left:740px">断面平均流</div>
<div class="a sep" style="left:734px"></div>
<div class="a th" style="left:825px">断面最大流</div>
<div class="a sep" style="left:819px"></div>
<div class="a th" style="left:908px">河水特征码</div>
<div class="a sep" style="left:902px"></div>
<div class="a th" style="left:980px">水势</div>
<div class="a sep" style="left:974px"></div>
<div class="a th" style="left:1016px">测速方法</div>
<div class="a sep" style="left:1010px"></div>
<div class="a th" style="left:1076px">测积方法</div>
<div class="a sep" style="left:1070px"></div>
<div class="a" id="tbody"></div>
<div class="a vs" style="left:38px"></div>
<div class="a vs" style="left:98px"></div>
<div class="a vs" style="left:291px"></div>
<div class="a vs" style="left:362px"></div>
<div class="a vs" style="left:428px"></div>
<div class="a vs" style="left:542px"></div>
<div class="a vs" style="left:596px"></div>
<div class="a vs" style="left:650px"></div>
<div class="a vs" style="left:734px"></div>
<div class="a vs" style="left:819px"></div>
<div class="a vs" style="left:902px"></div>
<div class="a vs" style="left:974px"></div>
<div class="a vs" style="left:1010px"></div>
<div class="a vs" style="left:1070px"></div>
<div class="a hs" style="top:618px"></div>
<div class="a hs" style="top:634px"></div>
<div class="a hs" style="top:650px"></div>
<div class="a hs" style="top:666px"></div>
<div class="a hs" style="top:682px"></div>
<div class="a hs" style="top:698px"></div>
<div class="a td mono" style="left:6px;top:604.6px">0</div>
<div class="a td mono" style="left:44px;top:604.6px">41104002</div>
<div class="a td" style="left:103px;top:603px;font-size:12.5px">湘江水库</div>
<div class="a td mono" style="left:297px;top:604.6px">111.230000</div>
<div class="a td mono" style="left:368px;top:604.6px">28.281111</div>
<div class="a td mono" style="left:434px;top:604.6px">2013/3/14 0:00:00</div>
<div class="a td mono" style="left:548px;top:604.6px">488.746</div>
<div class="a td mono" style="left:602px;top:604.6px">1.657</div>
<div class="a td mono" style="left:656px;top:604.6px">0.000</div>
<div class="a td mono" style="left:740px;top:604.6px">0.000</div>
<div class="a td mono" style="left:825px;top:604.6px">0.000</div>
<div class="a td mono" style="left:908px;top:604.6px">0</div>
<div class="a td mono" style="left:980px;top:604.6px">0</div>
<div class="a td mono" style="left:1016px;top:604.6px">0</div>
<div class="a td mono" style="left:1076px;top:604.6px">0</div>
<div class="a td mono" style="left:6px;top:620.6px">1</div>
<div class="a td mono" style="left:44px;top:620.6px">41104002</div>
<div class="a td" style="left:103px;top:619px;font-size:12.5px">陈河</div>
<div class="a td mono" style="left:297px;top:620.6px">112.147778</div>
<div class="a td mono" style="left:368px;top:620.6px">27.973611</div>
<div class="a td mono" style="left:434px;top:620.6px">2013/3/14 0:00:00</div>
<div class="a td mono" style="left:548px;top:620.6px">488.746</div>
<div class="a td mono" style="left:602px;top:620.6px">1.657</div>
<div class="a td mono" style="left:656px;top:620.6px">0.000</div>
<div class="a td mono" style="left:740px;top:620.6px">0.000</div>
<div class="a td mono" style="left:825px;top:620.6px">0.000</div>
<div class="a td mono" style="left:908px;top:620.6px">0</div>
<div class="a td mono" style="left:980px;top:620.6px">0</div>
<div class="a td mono" style="left:1016px;top:620.6px">0</div>
<div class="a td mono" style="left:1076px;top:620.6px">0</div>
<div class="a td mono" style="left:6px;top:636.6px">2</div>
<div class="a td mono" style="left:44px;top:636.6px">41104004</div>
<div class="a td" style="left:103px;top:635px;font-size:12.5px">田峪口</div>
<div class="a td mono" style="left:297px;top:636.6px">112.339167</div>
<div class="a td mono" style="left:368px;top:636.6px">28.052222</div>
<div class="a td mono" style="left:434px;top:636.6px">2013/1/6 16:36:50</div>
<div class="a td mono" style="left:548px;top:636.6px">524.549</div>
<div class="a td mono" style="left:602px;top:636.6px">430.112</div>
<div class="a td mono" style="left:656px;top:636.6px">0.000</div>
<div class="a td mono" style="left:740px;top:636.6px">0.000</div>
<div class="a td mono" style="left:825px;top:636.6px">0.000</div>
<div class="a td mono" style="left:908px;top:636.6px">0</div>
<div class="a td mono" style="left:980px;top:636.6px">0</div>
<div class="a td mono" style="left:1016px;top:636.6px">0</div>
<div class="a td mono" style="left:1076px;top:636.6px">0</div>
<div class="a td mono" style="left:6px;top:652.6px">3</div>
<div class="a td mono" style="left:44px;top:652.6px">41104010</div>
<div class="a td" style="left:103px;top:651px;font-size:12.5px">高冠河口</div>
<div class="a td mono" style="left:297px;top:652.6px">112.757222</div>
<div class="a td mono" style="left:368px;top:652.6px">28.003333</div>
<div class="a td mono" style="left:434px;top:652.6px">2013/1/6 16:36:22</div>
<div class="a td mono" style="left:548px;top:652.6px">488.754</div>
<div class="a td mono" style="left:602px;top:652.6px">1.830</div>
<div class="a td mono" style="left:656px;top:652.6px">0.000</div>
<div class="a td mono" style="left:740px;top:652.6px">0.000</div>
<div class="a td mono" style="left:825px;top:652.6px">0.000</div>
<div class="a td mono" style="left:908px;top:652.6px">0</div>
<div class="a td mono" style="left:980px;top:652.6px">0</div>
<div class="a td mono" style="left:1016px;top:652.6px">0</div>
<div class="a td mono" style="left:1076px;top:652.6px">0</div>
<div class="a td mono" style="left:6px;top:668.6px">4</div>
<div class="a td mono" style="left:44px;top:668.6px">41104017</div>
<div class="a td" style="left:103px;top:667px;font-size:12.5px">沣惠渠</div>
<div class="a td mono" style="left:297px;top:668.6px">113.345278</div>
<div class="a td mono" style="left:368px;top:668.6px">28.398611</div>
<div class="a td mono" style="left:434px;top:668.6px">2013/1/6 16:07:58</div>
<div class="a td mono" style="left:548px;top:668.6px">373.973</div>
<div class="a td mono" style="left:602px;top:668.6px">0.000</div>
<div class="a td mono" style="left:656px;top:668.6px">0.000</div>
<div class="a td mono" style="left:740px;top:668.6px">0.000</div>
<div class="a td mono" style="left:825px;top:668.6px">0.000</div>
<div class="a td mono" style="left:908px;top:668.6px">0</div>
<div class="a td mono" style="left:980px;top:668.6px">0</div>
<div class="a td mono" style="left:1016px;top:668.6px">0</div>
<div class="a td mono" style="left:1076px;top:668.6px">0</div>
<div class="a td mono" style="left:6px;top:684.6px">5</div>
<div class="a td mono" style="left:44px;top:684.6px">41104022</div>
<div class="a td" style="left:103px;top:683px;font-size:12.5px">鸣犊</div>
<div class="a td mono" style="left:297px;top:684.6px">113.109444</div>
<div class="a td mono" style="left:368px;top:684.6px">28.309167</div>
<div class="a td mono" style="left:434px;top:684.6px">2013/1/6 16:48:45</div>
<div class="a td mono" style="left:548px;top:684.6px">471.389</div>
<div class="a td mono" style="left:602px;top:684.6px">0.000</div>
<div class="a td mono" style="left:656px;top:684.6px">0.000</div>
<div class="a td mono" style="left:740px;top:684.6px">0.000</div>
<div class="a td mono" style="left:825px;top:684.6px">0.000</div>
<div class="a td mono" style="left:908px;top:684.6px">0</div>
<div class="a td mono" style="left:980px;top:684.6px">0</div>
<div class="a td mono" style="left:1016px;top:684.6px">0</div>
<div class="a td mono" style="left:1076px;top:684.6px">0</div>
<div class="a td mono" style="left:6px;top:700.6px">6</div>
<div class="a td mono" style="left:44px;top:700.6px">41104031</div>
<div class="a td" style="left:103px;top:699px;font-size:12.5px">庞峪口</div>
<div class="a td mono" style="left:297px;top:700.6px">113.000000</div>
<div class="a td mono" style="left:368px;top:700.6px">28.000000</div>
<div class="a td mono" style="left:434px;top:700.6px">2013/1/6 16:44:43</div>
<div class="a td mono" style="left:548px;top:700.6px">515.713</div>
<div class="a td mono" style="left:602px;top:700.6px">0.000</div>
<div class="a td mono" style="left:656px;top:700.6px">0.000</div>
<div class="a td mono" style="left:740px;top:700.6px">0.000</div>
<div class="a td mono" style="left:825px;top:700.6px">0.000</div>
<div class="a td mono" style="left:908px;top:700.6px">0</div>
<div class="a td mono" style="left:980px;top:700.6px">0</div>
<div class="a td mono" style="left:1016px;top:700.6px">0</div>
<div class="a td mono" style="left:1076px;top:700.6px">0</div>
<div class="a" id="tbot"></div>
<div class="a" style="left:1348px;top:579px;width:10px;height:126px;background:#f0f0f0"></div>
<div class="a" style="left:1348px;top:581px;width:18px;height:17px;border:1px solid #2a3f5f;border-radius:4px;background:linear-gradient(#fbfbfb,#dadada)"></div>
<svg class="a" style="left:1351px;top:585px" width="7" height="7"><path d="M0 6 L6 0 L7 0 L7 6 Z" fill="#4a7fb8" stroke="#1f3f6a" stroke-width="1"/></svg>
<div class="a" style="left:1348px;top:602px;width:18px;height:52px;border:1px solid #2a3f5f;border-radius:4px;background:linear-gradient(#fafafa,#cfcfcf 50%,#f2f2f2)"></div>
<div class="a" style="left:1348px;top:684px;width:18px;height:17px;border:1px solid #2a3f5f;border-radius:4px;background:linear-gradient(#fbfbfb,#dadada)"></div>
<svg class="a" style="left:1351px;top:688px" width="7" height="7"><path d="M0 1 L6 7 L7 7 L7 1 Z" fill="#4a7fb8" stroke="#1f3f6a" stroke-width="1"/></svg>
<div class="a" id="status"></div>
<div class="a" style="left:27px;top:711px;font-size:12.5px;line-height:14px;color:#222">Ready</div>
<div class="a" style="left:133px;top:711px;font-size:12.5px;line-height:14px;color:#2233aa">DMGIS专项服务系统</div>
<div class="a" style="left:297px;top:711px;font-size:12.5px;line-height:14px;color:#222">经度:113°9'7"</div>
<div class="a" style="left:548px;top:711px;font-size:12.5px;line-height:14px;color:#222">纬度:27°47'18"</div>
<div class="a" style="left:1205px;top:700px;width:153px;height:20px;border:1px solid #9aa6b4;border-radius:3px 3px 0 0;background:linear-gradient(#f6f8fb,#d9dfe7)"></div>
<div class="a" style="left:1240px;top:704px;font-size:13px;line-height:15px;color:#222">内存使用: 68 %</div>
</body></html>
